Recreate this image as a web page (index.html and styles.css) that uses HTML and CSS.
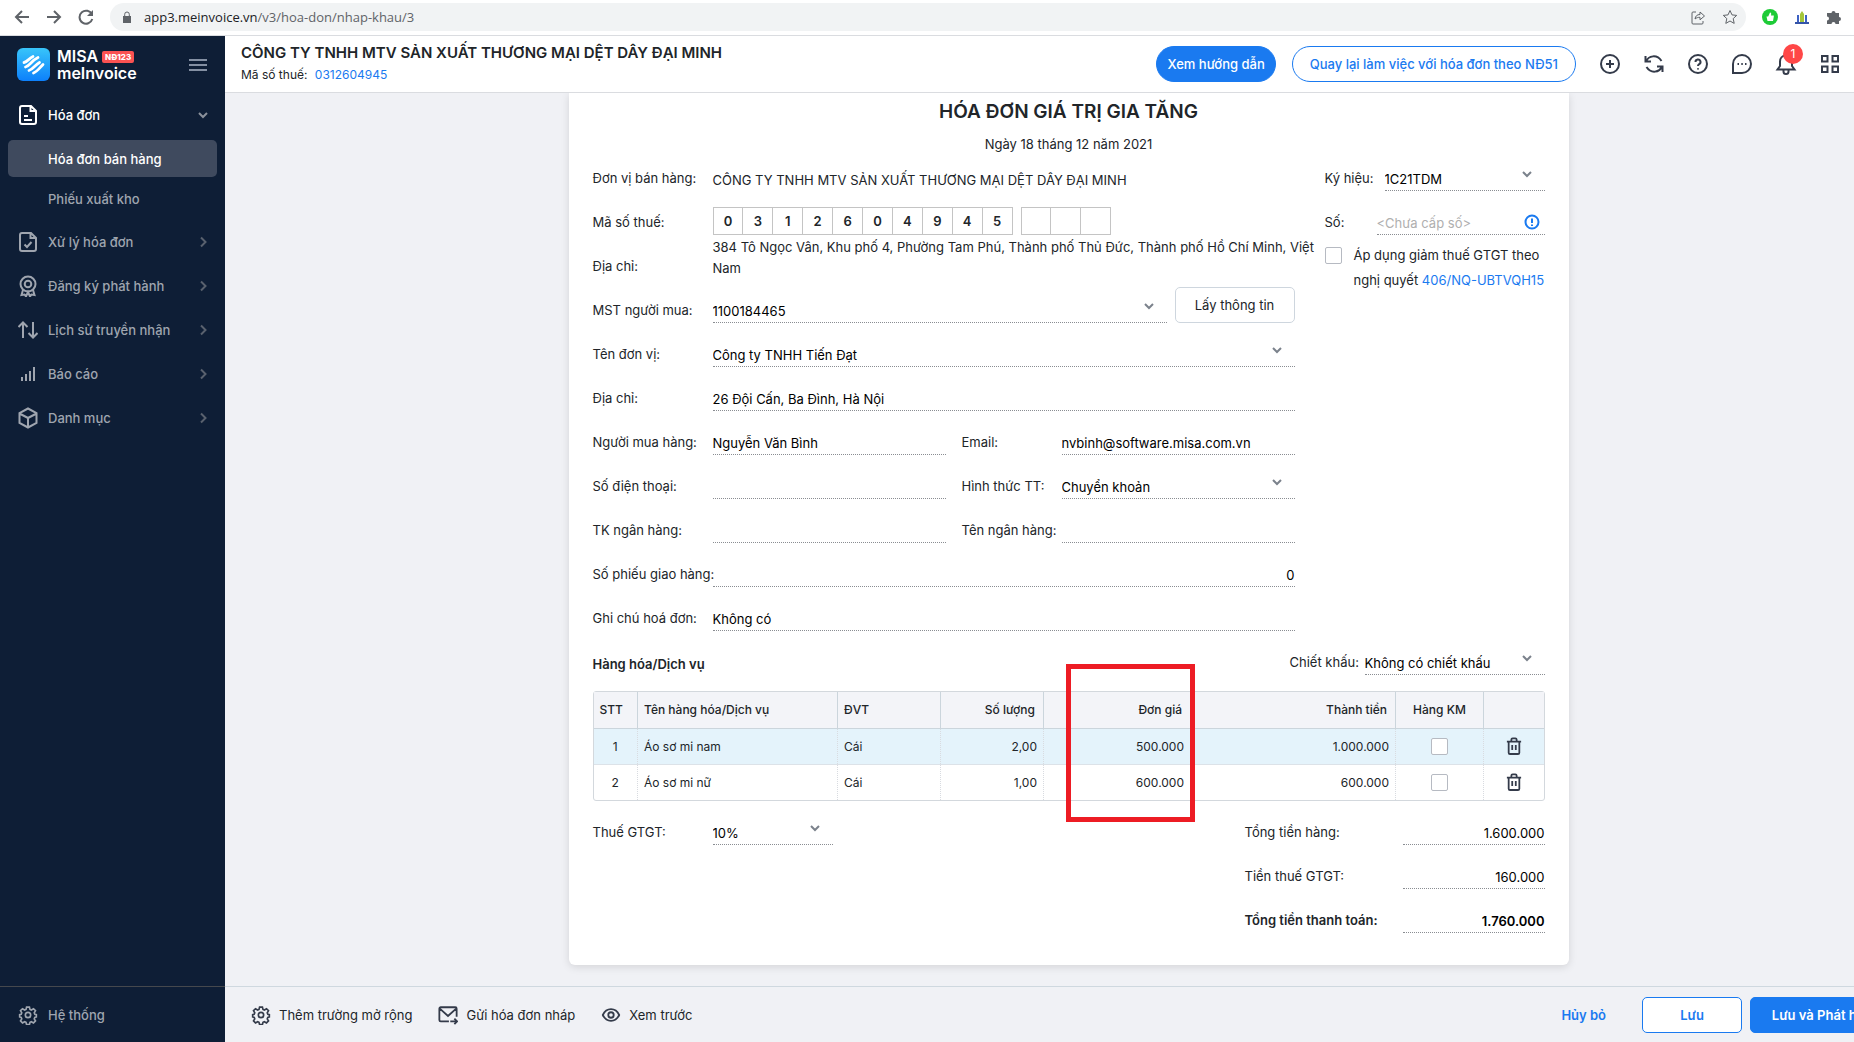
FILE: index.html
```html
<!DOCTYPE html>
<html lang="vi">
<head>
    <meta charset="UTF-8">
    <meta name="viewport" content="width=device-width, initial-scale=1.0">
    <title>MISA meInvoice</title>
    <link rel="stylesheet" href="styles.css">
</head>
<body>
    <!-- Shared icons -->
    <svg class="sprite" aria-hidden="true">
        <symbol id="down" viewBox="0 0 12 12"><path d="M2 4l4 4 4-4"/></symbol>
        <symbol id="right" viewBox="0 0 12 12"><path d="M4 1.5L8.500 6 4 10.500"/></symbol>
        <symbol id="gear" viewBox="0 0 24 24"><circle cx="12" cy="12" r="3.200"/><path d="M10.300 2.500h3.400l.7 2.800 1.600.7 2.600-1.500 2.400 2.400-1.500 2.600.7 1.600 1.800.4v2.900l-1.900.6-.6 1.600 1.500 2.500-2.400 2.400-2.600-1.500-1.600.7-.7 2.800h-3.400l-.7-2.800-1.600-.7-2.600 1.500L3 19.100l1.500-2.500-.6-1.600-1.900-.6v-2.900l1.800-.4.7-1.600L3 6.900l2.400-2.400L8 6l1.600-.7z"/></symbol>
        <symbol id="trash" viewBox="0 0 18 20"><path d="M1 5h16M3 5v12.500a1.500 1.500 0 0 0 1.500 1.500h9a1.500 1.500 0 0 0 1.500-1.500V5M6 5V3a1.500 1.500 0 0 1 1.500-1.500h3A1.500 1.500 0 0 1 12 3v2M7 9v5.500M11 9v5.500"/></symbol>
    </svg>

    <div class="browser-bar">
        <button type="button" aria-label="Back"><svg viewBox="0 0 16 16"><path d="M15 8H2M8 2L2 8l6 6"/></svg></button>
        <button type="button" aria-label="Forward"><svg viewBox="0 0 16 16"><path d="M1 8h13M8 2l6 6-6 6"/></svg></button>
        <button type="button" aria-label="Reload"><svg viewBox="0 0 16 16"><path d="M14 5.500A6.500 6.500 0 1 0 14.300 10"/><path class="solid" d="M15 1v6H9z"/></svg></button>
        <div class="address">
            <svg class="lock" viewBox="0 0 10 12"><path class="solid" d="M1 5h8v7H1z"/><path d="M2.700 5V3.300a2.300 2.300 0 0 1 4.600 0V5"/></svg>
            <span class="url"><b>app3.meinvoice.vn</b>/v3/hoa-don/nhap-khau/3</span>
            <svg class="small-icon" viewBox="0 0 16 16"><path d="M6 3H3a1 1 0 0 0-1 1v10a1 1 0 0 0 1 1h9a1 1 0 0 0 1-1v-2M5 10c.5-3 2-4.500 5-4.500V3l4.500 4L10 10.800V8.300c-2 0-3.500.4-5 1.700z"/></svg>
            <svg class="small-icon" viewBox="0 0 16 16"><path d="M8 1.500l2 4.400 4.700.5-3.500 3.200 1 4.800L8 12l-4.200 2.400 1-4.800L1.300 6.400 6 5.900z"/></svg>
        </div>
        <svg class="extension" viewBox="0 0 16 16"><circle cx="8" cy="8" r="8" fill="#1ecb37"/><path d="M4.500 7.500h1.700L8 3.500c1.500 0 1.300 1.500 1 3h2.800v1L11 12H5.500z" fill="#fff"/></svg>
        <svg class="extension" viewBox="0 0 16 16"><path d="M1 14c2 0 2-1 2-2V6h2v8zM15 14c-2 0-2-1-2-2V6h-2v8z" fill="#3e62c4"/><path d="M6 14V5l2-3 2 3v9z" fill="#a3c63b"/><path d="M1 13h14v2H1z" fill="#3454a8"/></svg>
        <svg class="extension" viewBox="0 0 16 16"><path d="M1 4h4.500a2 2 0 1 1 4 0H13v4a2 2 0 1 1 0 4v3H9.500a2 2 0 0 0-4 0H1v-3.500a2 2 0 0 0 0-4z" fill="#5f6368"/></svg>
    </div>

    <div class="app">
        <aside class="sidebar">
            <div class="brand">
                <svg class="logo" viewBox="0 0 33 33">
                    <defs><linearGradient id="logoFill" x1="0" y1="0" x2="0" y2="1"><stop offset="0" stop-color="#38c5fa"/><stop offset="1" stop-color="#0d80fb"/></linearGradient></defs>
                    <rect width="33" height="33" rx="6" fill="url(#logoFill)"/>
                    <path d="M7 14.500c3.500-.5 4.500-4 9-6M8.500 19c4.500-1 6-6.500 12.500-9.500M12 22.500c4-1 6-5.500 10.500-8M16.500 25c4-1.500 6-5 9.500-8.500" fill="none" stroke="#fff" stroke-width="2.800" stroke-linecap="round"/>
                </svg>
                <div class="brand-name">
                    <span>MISA <em>NĐ123</em></span>
                    <span>meInvoice</span>
                </div>
                <button type="button" class="menu-button" aria-label="Menu"><svg viewBox="0 0 18 14"><path d="M0 2h18M0 7h18M0 12h18"/></svg></button>
            </div>
            <nav>
                <a href="#" class="nav-item open">
                    <svg class="icon" viewBox="0 0 20 22"><path d="M13 2H4a2 2 0 0 0-2 2v14a2 2 0 0 0 2 2h12a2 2 0 0 0 2-2V7zM12.500 2.500V7H17M6 12h4M6 16h8"/></svg>
                    <span>Hóa đơn</span><svg class="arrow"><use href="#down"/></svg>
                </a>
                <a href="#" class="sub-item active">Hóa đơn bán hàng</a>
                <a href="#" class="sub-item">Phiếu xuất kho</a>
                <a href="#" class="nav-item">
                    <svg class="icon" viewBox="0 0 20 22"><path d="M13 2H4a2 2 0 0 0-2 2v14a2 2 0 0 0 2 2h12a2 2 0 0 0 2-2V7zM12.500 2.500V7H17M6.500 13.500L9 16l4.500-5"/></svg>
                    <span>Xử lý hóa đơn</span><svg class="arrow"><use href="#right"/></svg>
                </a>
                <a href="#" class="nav-item">
                    <svg class="icon" viewBox="0 0 20 22"><circle cx="10" cy="9" r="7.500"/><circle cx="10" cy="9" r="3.300"/><path d="M5 15l-1.500 5 3-.5L8 21.500l2-4.500 2 4.500 1.500-2 3 .5L15 15"/></svg>
                    <span>Đăng ký phát hành</span><svg class="arrow"><use href="#right"/></svg>
                </a>
                <a href="#" class="nav-item">
                    <svg class="icon" viewBox="0 0 20 22"><path d="M5 19V4M0.500 8L5 3.500 9.500 8M15 3v15M10.500 14l4.500 4.500 4.500-4.500"/></svg>
                    <span>Lịch sử truyền nhận</span><svg class="arrow"><use href="#right"/></svg>
                </a>
                <a href="#" class="nav-item">
                    <svg class="icon" viewBox="0 0 20 22"><path d="M4 14v4M8 11v7M12 8v10M16 4v14"/></svg>
                    <span>Báo cáo</span><svg class="arrow"><use href="#right"/></svg>
                </a>
                <a href="#" class="nav-item">
                    <svg class="icon" viewBox="0 0 20 22"><path d="M10 1.500l8.500 4.500v10L10 20.500 1.500 16V6zM1.500 6.500L10 11l8.500-4.500M10 11v9"/></svg>
                    <span>Danh mục</span><svg class="arrow"><use href="#right"/></svg>
                </a>
            </nav>
            <a href="#" class="system">
                <svg class="icon"><use href="#gear"/></svg>
                <span>Hệ thống</span>
            </a>
        </aside>

        <div class="page">
            <header class="topbar">
                <div class="company">
                    <h1>CÔNG TY TNHH MTV SẢN XUẤT THƯƠNG MẠI DỆT DÂY ĐẠI MINH</h1>
                    <p>Mã số thuế: <a href="#">0312604945</a></p>
                </div>
                <button type="button" class="pill filled">Xem hướng dẫn</button>
                <button type="button" class="pill outlined">Quay lại làm việc với hóa đơn theo NĐ51</button>
                <div class="tools">
                    <button type="button" aria-label="Thêm"><svg viewBox="0 0 22 22"><circle cx="11" cy="11" r="9"/><path d="M11 7v8M7 11h8"/></svg></button>
                    <button type="button" aria-label="Tải lại"><svg viewBox="0 0 22 22"><path d="M2.500 3v5.500H8M3 8.500C5.500 2.500 14 1 18.500 8M19.500 19v-5.500H14M19 13.500C16.500 19.500 8 21 3.500 14"/></svg></button>
                    <button type="button" aria-label="Trợ giúp"><svg viewBox="0 0 22 22"><circle cx="11" cy="11" r="9"/><path d="M8.500 9a2.500 2.500 0 1 1 3.700 2.200c-.8.5-1.200.9-1.200 1.800M11 15.200v1.300"/></svg></button>
                    <button type="button" aria-label="Trò chuyện"><svg viewBox="0 0 22 22"><path d="M2 20v-9a9 9 0 1 1 9 9z"/><path d="M6.500 11h1.500M10.300 11h1.500M14 11h1.500"/></svg></button>
                    <button type="button" aria-label="Thông báo"><svg viewBox="0 0 22 22"><path d="M11 2.500c-4 0-6 3-6 6V13l-2.500 3.500h17L17 13V8.500c0-3-2-6-6-6zM8.500 17v1.500a2.500 2.500 0 0 0 5 0V17"/></svg><span class="badge">1</span></button>
                    <button type="button" aria-label="Ứng dụng"><svg viewBox="0 0 22 22"><path d="M3 3h5.500v5.500H3zM13.500 3H19v5.500h-5.500zM3 13.500h5.500V19H3zM13.500 13.500H19V19h-5.500z"/></svg></button>
                </div>
            </header>

            <main>
                <form class="invoice">
                    <h2>HÓA ĐƠN GIÁ TRỊ GIA TĂNG</h2>
                    <p class="date">Ngày 18 tháng 12 năm 2021</p>

                    <div class="info">
                        <div class="details">
                            <div class="row"><span class="label">Đơn vị bán hàng:</span><span class="text">CÔNG TY TNHH MTV SẢN XUẤT THƯƠNG MẠI DỆT DÂY ĐẠI MINH</span></div>
                            <div class="row">
                                <span class="label">Mã số thuế:</span>
                                <div class="digits"><b>0</b><b>3</b><b>1</b><b>2</b><b>6</b><b>0</b><b>4</b><b>9</b><b>4</b><b>5</b></div>
                                <div class="digits branch"><b></b><b></b><b></b></div>
                            </div>
                            <div class="row seller-address"><span class="label">Địa chỉ:</span><span class="text">384 Tô Ngọc Vân, Khu phố 4, Phường Tam Phú, Thành phố Thủ Đức, Thành phố Hồ Chí Minh, Việt Nam</span></div>
                            <div class="row">
                                <label class="label" for="buyerTax">MST người mua:</label>
                                <div class="select"><select id="buyerTax"><option>1100184465</option></select><svg><use href="#down"/></svg></div>
                                <button type="button" class="lookup">Lấy thông tin</button>
                            </div>
                            <div class="row">
                                <label class="label" for="buyerName">Tên đơn vị:</label>
                                <div class="select"><select id="buyerName"><option>Công ty TNHH Tiến Đạt</option></select><svg><use href="#down"/></svg></div>
                            </div>
                            <div class="row"><label class="label" for="buyerAddress">Địa chỉ:</label><input id="buyerAddress" type="text" value="26 Đội Cấn, Ba Đình, Hà Nội"></div>
                            <div class="pair">
                                <div class="row"><label class="label" for="person">Người mua hàng:</label><input id="person" type="text" value="Nguyễn Văn Bình"></div>
                                <div class="row narrow"><label class="label" for="email">Email:</label><input id="email" type="text" value="nvbinh@software.misa.com.vn"></div>
                            </div>
                            <div class="pair">
                                <div class="row"><label class="label" for="phone">Số điện thoại:</label><input id="phone" type="text"></div>
                                <div class="row narrow"><label class="label" for="payment">Hình thức TT:</label><div class="select"><select id="payment"><option>Chuyển khoản</option></select><svg><use href="#down"/></svg></div></div>
                            </div>
                            <div class="pair">
                                <div class="row"><label class="label" for="account">TK ngân hàng:</label><input id="account" type="text"></div>
                                <div class="row narrow"><label class="label" for="bank">Tên ngân hàng:</label><input id="bank" type="text"></div>
                            </div>
                            <div class="row"><label class="label" for="delivery">Số phiếu giao hàng:</label><input id="delivery" class="number" type="text" value="0"></div>
                            <div class="row"><label class="label" for="note">Ghi chú hoá đơn:</label><input id="note" type="text" value="Không có"></div>
                        </div>

                        <div class="serial">
                            <div class="row"><label class="label" for="symbol">Ký hiệu:</label><div class="select"><select id="symbol"><option>1C21TDM</option></select><svg><use href="#down"/></svg></div></div>
                            <div class="row issue">
                                <label class="label" for="number">Số:</label><input id="number" type="text" placeholder="&lt;Chưa cấp số&gt;">
                                <svg class="notice" viewBox="0 0 16 16"><circle cx="8" cy="8" r="6.500"/><path d="M8 4.500V9M8 10.500V12"/></svg>
                            </div>
                            <div class="reduce">
                                <input type="checkbox" id="reduce">
                                <label for="reduce">Áp dụng giảm thuế GTGT theo nghị quyết <a href="#">406/NQ-UBTVQH15</a></label>
                            </div>
                        </div>
                    </div>

                    <div class="goods-head">
                        <h3>Hàng hóa/Dịch vụ</h3>
                        <div class="row discount"><label class="label" for="discount">Chiết khấu:</label><div class="select"><select id="discount"><option>Không có chiết khấu</option></select><svg><use href="#down"/></svg></div></div>
                    </div>

                    <div class="goods">
                        <table>
                            <colgroup><col class="c-no"><col class="c-name"><col class="c-unit"><col class="c-unit"><col class="c-price"><col class="c-total"><col class="c-promo"><col class="c-action"></colgroup>
                            <thead>
                                <tr><th>STT</th><th>Tên hàng hóa/Dịch vụ</th><th>ĐVT</th><th class="number">Số lượng</th><th class="number">Đơn giá</th><th class="number">Thành tiền</th><th class="center">Hàng KM</th><th></th></tr>
                            </thead>
                            <tbody>
                                <tr class="selected"><td class="center">1</td><td>Áo sơ mi nam</td><td>Cái</td><td class="number">2,00</td><td class="number">500.000</td><td class="number">1.000.000</td><td class="center"><input type="checkbox" aria-label="Hàng KM 1"></td><td class="center"><button type="button" class="delete" aria-label="Xóa"><svg><use href="#trash"/></svg></button></td></tr>
                                <tr><td class="center">2</td><td>Áo sơ mi nữ</td><td>Cái</td><td class="number">1,00</td><td class="number">600.000</td><td class="number">600.000</td><td class="center"><input type="checkbox" aria-label="Hàng KM 2"></td><td class="center"><button type="button" class="delete" aria-label="Xóa"><svg><use href="#trash"/></svg></button></td></tr>
                            </tbody>
                        </table>
                        <div class="highlight"></div>
                    </div>

                    <div class="summary">
                        <div class="row vat"><label class="label" for="vat">Thuế GTGT:</label><div class="select"><select id="vat"><option>10%</option></select><svg><use href="#down"/></svg></div></div>
                        <div class="totals">
                            <div class="row"><label class="label" for="subtotal">Tổng tiền hàng:</label><input id="subtotal" class="number" type="text" value="1.600.000"></div>
                            <div class="row"><label class="label" for="tax">Tiền thuế GTGT:</label><input id="tax" class="number" type="text" value="160.000"></div>
                            <div class="row grand"><label class="label" for="grand">Tổng tiền thanh toán:</label><input id="grand" class="number" type="text" value="1.760.000"></div>
                        </div>
                    </div>
                </form>
            </main>

            <footer class="actions">
                <button type="button" class="plain"><svg class="icon"><use href="#gear"/></svg>Thêm trường mở rộng</button>
                <button type="button" class="plain"><svg class="icon" viewBox="0 0 22 22"><path d="M12 18H3a1.500 1.500 0 0 1-1.500-1.500V4A1.500 1.500 0 0 1 3 2.500h16A1.500 1.500 0 0 1 20.500 4v9M2 4l9 8 9-8M13.500 18h7M18 15l3 3-3 3"/></svg>Gửi hóa đơn nháp</button>
                <button type="button" class="plain"><svg class="icon" viewBox="0 0 22 22"><path d="M2 11c4-8.500 14-8.500 18 0-4 8.500-14 8.500-18 0z"/><circle cx="11" cy="11" r="3"/></svg>Xem trước</button>
                <button type="button" class="plain cancel">Hủy bỏ</button>
                <button type="button" class="save">Lưu</button>
                <button type="button" class="save publish">Lưu và Phát hành</button>
            </footer>
        </div>
    </div>
</body>
</html>
```
FILE: styles.css
```css
* {
    box-sizing: border-box;
}

body {
    margin: 0;
    height: 100vh;
    display: flex;
    flex-direction: column;
    overflow: hidden;
    font-family: Inter, "Liberation Sans", sans-serif;
    font-size: 13px;
    color: #212529;
    background-color: #f0f1f5;
}

h1, h2, h3, p {
    margin: 0;
}

a {
    color: #1a7af0;
    text-decoration: none;
}

button, input, select {
    font: inherit;
    color: inherit;
}

button {
    padding: 0;
    border: none;
    background: none;
    cursor: pointer;
}

svg {
    display: block;
    flex-shrink: 0;
    fill: none;
    stroke: currentColor;
    stroke-width: 2;
}

.sprite {
    display: none;
}

/* Browser bar */
.browser-bar {
    height: 36px;
    flex-shrink: 0;
    display: flex;
    align-items: center;
    gap: 16px;
    padding: 0 12px 2px 14px;
    background-color: #fff;
    border-bottom: 1px solid #dadce0;
    color: #5f6368;
}

.browser-bar button svg {
    width: 16px;
    height: 16px;
}

.browser-bar .solid {
    fill: currentColor;
    stroke: none;
}

.address {
    flex: 1;
    height: 28px;
    display: flex;
    align-items: center;
    gap: 16px;
    padding: 0 8px 0 12px;
    border-radius: 14px;
    background-color: #f1f3f4;
    font-family: "Open Sans", sans-serif;
    font-size: 13px;
}

.address .lock {
    width: 10px;
    height: 12px;
    stroke-width: 1;
}

.address .url {
    flex: 1;
    margin-left: -4px;
}

.address b {
    font-weight: normal;
    color: #202124;
}

.small-icon {
    width: 16px;
    height: 16px;
    stroke-width: 1;
}

.extension {
    width: 16px;
    height: 16px;
    stroke: none;
}

/* Sidebar */
.app {
    flex: 1;
    min-height: 0;
    display: flex;
}

.sidebar {
    width: 225px;
    flex-shrink: 0;
    display: flex;
    flex-direction: column;
    background-color: #0e1e36;
    color: #9fa5af;
}

.brand {
    height: 57px;
    display: flex;
    align-items: center;
    gap: 7px;
    padding: 0 18px 0 17px;
}

.logo {
    width: 33px;
    height: 33px;
    stroke: none;
}

.brand-name {
    flex: 1;
    display: flex;
    flex-direction: column;
    color: #fff;
    font-size: 16px;
    font-weight: 600;
    line-height: 16px;
}

.brand-name em {
    padding: 1px 3px;
    border-radius: 2px;
    background-color: #fa5252;
    font-size: 8px;
    font-style: normal;
    font-weight: 800;
    vertical-align: 2px;
}

.menu-button svg {
    width: 18px;
    height: 14px;
    color: #8490a3;
}

nav {
    flex: 1;
}

.nav-item, .system {
    height: 44px;
    display: flex;
    align-items: center;
    gap: 10px;
    padding: 0 16px 0 18px;
    color: inherit;
    font-weight: 500;
}

.nav-item .icon {
    width: 20px;
    height: 22px;
}

.nav-item span {
    flex: 1;
}

.arrow {
    width: 12px;
    height: 12px;
    color: #59616e;
}

.nav-item.open {
    color: #fff;
}

.nav-item.open .arrow {
    color: #8b919b;
}

.sub-item {
    height: 37px;
    display: flex;
    align-items: center;
    margin: 3px 8px;
    padding-left: 40px;
    border-radius: 5px;
    color: inherit;
    font-weight: 500;
}

.sub-item.active {
    background-color: #3f4a5e;
    color: #fff;
}

.system {
    height: 56px;
    border-top: 1px solid #45484d;
}

.system .icon {
    width: 20px;
    height: 20px;
}

/* Top bar */
.page {
    flex: 1;
    min-width: 0;
    display: flex;
    flex-direction: column;
}

.topbar {
    height: 57px;
    flex-shrink: 0;
    display: flex;
    align-items: center;
    gap: 16px;
    padding: 0 13px 0 16px;
    background-color: #fff;
    border-bottom: 1px solid #dadce0;
}

.company {
    flex: 1;
    line-height: 22px;
}

.company h1 {
    font-size: 15px;
    font-weight: 600;
    white-space: nowrap;
}

.company p {
    font-size: 12px;
}

.company a {
    margin-left: 4px;
}

.pill {
    height: 36px;
    padding: 0 10px;
    border: 1px solid #1a7af0;
    border-radius: 18px;
    color: #1a7af0;
    font-weight: 500;
    white-space: nowrap;
}

.pill.filled {
    background-color: #1a7af0;
    color: #fff;
}

.pill.outlined {
    padding: 0 17px;
}

.tools {
    display: flex;
    gap: 22px;
    margin-left: 7px;
    color: #343b4a;
}

.tools button {
    position: relative;
}

.tools svg {
    width: 22px;
    height: 22px;
}

.badge {
    position: absolute;
    top: -9px;
    right: -6px;
    width: 20px;
    height: 20px;
    border-radius: 10px;
    background-color: #ff4747;
    color: #fff;
    font-size: 12px;
    line-height: 20px;
}

/* Invoice */
main {
    flex: 1;
    min-height: 0;
    overflow: hidden;
    padding-left: 58px;
}

.invoice {
    width: 1000px;
    margin: 0 auto;
    padding: 0 24px 32px;
    border-radius: 0 0 6px 6px;
    background-color: #fff;
    box-shadow: 0 2px 8px rgba(0, 0, 0, 0.12);
}

.invoice h2 {
    padding-top: 6px;
    font-size: 19px;
    font-weight: 600;
    line-height: 26px;
    text-align: center;
}

.date {
    padding-top: 9px;
    line-height: 20px;
    text-align: center;
}

.info {
    display: grid;
    grid-template-columns: 1fr 220px;
    gap: 30px;
    margin-top: -7px;
}

.row {
    flex: 1;
    height: 44px;
    display: flex;
    align-items: flex-end;
}

.label {
    width: 120px;
    flex-shrink: 0;
    padding-bottom: 3px;
    line-height: 20px;
    white-space: nowrap;
}

.narrow .label {
    width: 100px;
}

.row .text {
    line-height: 21px;
}

/* long addresses may run into the gap before the serial column */
.seller-address {
    margin-right: -28px;
}

.row input, .select {
    flex: 1;
    min-width: 0;
    height: 28px;
    border: none;
    border-bottom: 1px dotted #8a8d92;
    background: none;
    color: #000;
}

.row input {
    padding: 4px 0 0;
}

.row input::placeholder {
    color: #afafaf;
}

.select {
    position: relative;
}

.select select {
    width: 100%;
    height: 27px;
    padding: 4px 0 0;
    border: none;
    background: none;
    appearance: none;
}

.select svg {
    position: absolute;
    top: 5px;
    right: 12px;
    width: 12px;
    height: 12px;
    color: #7b828c;
    pointer-events: none;
}

.number {
    text-align: right;
}

.pair {
    display: grid;
    grid-template-columns: 1fr 333px;
    gap: 16px;
}

.digits {
    width: 300px;
    display: flex;
    margin-right: 8px;
    border: 1px solid #c4c4c4;
}

.digits.branch {
    width: 90px;
}

.digits b {
    flex: 1;
    height: 26px;
    font-weight: 600;
    line-height: 26px;
    text-align: center;
}

.digits b + b {
    border-left: 1px solid #c4c4c4;
}

.lookup {
    width: 120px;
    height: 36px;
    margin-left: 8px;
    border: 1px solid #ced6de;
    border-radius: 5px;
}

.serial .label {
    width: 60px;
}

.serial .issue .label {
    width: 52px;
}

.issue {
    position: relative;
}

.notice {
    position: absolute;
    right: 5px;
    bottom: 5px;
    width: 16px;
    height: 16px;
    color: #1a7af0;
}

.reduce {
    display: flex;
    gap: 12px;
    padding-top: 8px;
    line-height: 25px;
}

input[type="checkbox"] {
    width: 17px;
    height: 17px;
    flex-shrink: 0;
    margin: 4px 0 0;
    border: 1px solid #b6bac2;
    border-radius: 2px;
    background-color: #fff;
    appearance: none;
}

.goods-head {
    display: flex;
    justify-content: space-between;
    align-items: flex-end;
}

.goods-head h3 {
    padding-bottom: 1px;
    font-size: 13px;
    font-weight: 600;
    line-height: 20px;
}

.discount {
    flex: 0 0 255px;
}

.discount .label {
    width: 75px;
}

.goods {
    position: relative;
    margin-top: 16px;
    border: 1px solid #d3d8dd;
    border-radius: 3px;
    font-size: 12px;
}

table {
    width: 100%;
    border-collapse: collapse;
    table-layout: fixed;
}

th, td {
    height: 36px;
    padding: 0 6px;
    text-align: left;
}

th {
    border-right: 1px solid #cbd5dc;
    border-bottom: 1px solid #cbd5dc;
    background-color: #f3f4f8;
    font-weight: 500;
}

td {
    border-right: 1px dotted #d8dbe0;
}

th:last-child, td:last-child {
    border-right: none;
}

th.number, td.number {
    text-align: right;
}

th.number {
    padding-right: 8px;
}

th.center, td.center {
    padding: 0;
    text-align: center;
}

.selected {
    background-color: #e4f3fb;
    border-bottom: 1px solid #dce2e8;
}

td input[type="checkbox"] {
    display: block;
    margin: 0 auto;
}

.delete {
    color: #343b4a;
    vertical-align: middle;
}

.delete svg {
    width: 16px;
    height: 18px;
}

.c-no { width: 44px; }
.c-name { width: 200px; }
.c-unit { width: 103px; }
.c-price { width: 147px; }
.c-promo { width: 88px; }
.c-action { width: 60px; }

.highlight {
    position: absolute;
    top: -28px;
    left: 472px;
    width: 129px;
    height: 158px;
    border: 5px solid #ed1c24;
    pointer-events: none;
}

.summary {
    display: flex;
    justify-content: space-between;
    align-items: flex-start;
}

.vat {
    flex: 0 0 240px;
}

.totals {
    width: 300px;
}

.totals .label {
    width: 158px;
}

.totals .row {
    width: 100%;
}

.grand {
    font-weight: 600;
}

/* Bottom actions */
.actions {
    height: 56px;
    flex-shrink: 0;
    display: flex;
    align-items: center;
    gap: 8px;
    padding-left: 26px;
    border-top: 1px solid #cfd8df;
    overflow: hidden;
    white-space: nowrap;
}

.plain {
    display: flex;
    align-items: center;
    gap: 8px;
    margin-right: 18px;
}

.plain .icon {
    width: 20px;
    height: 20px;
    color: #343b4a;
}

.cancel {
    margin-left: auto;
    margin-right: 28px;
    color: #1a7af0;
    font-weight: 600;
}

.save {
    width: 100px;
    height: 36px;
    flex-shrink: 0;
    border: 1px solid #1a7af0;
    border-radius: 5px;
    background-color: #fff;
    color: #1a7af0;
    font-weight: 600;
}

.publish {
    width: 152px;
    margin-right: -48px;
    background-color: #1a7af0;
    color: #fff;
}
```
